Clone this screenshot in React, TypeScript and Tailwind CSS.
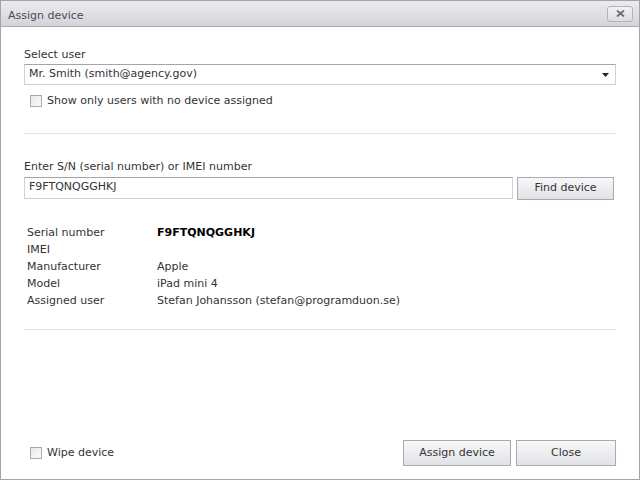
export default function App() {
  const rows: [string, string, boolean?][] = [
    ['Serial number', 'F9FTQNQGGHKJ', true],
    ['IMEI', ''],
    ['Manufacturer', 'Apple'],
    ['Model', 'iPad mini 4'],
    ['Assigned user', 'Stefan Johansson (stefan@programduon.se)'],
  ];

  return (
    <div
      className="w-[640px] h-[480px] bg-white border border-[#a3a3ad] flex flex-col text-[11px] text-[#333]"
      style={{ fontFamily: '"DejaVu Sans", Verdana, sans-serif' }}
    >
      {/* Title bar */}
      <div className="h-[26px] shrink-0 flex items-center justify-between pl-[7px] pr-[6px] bg-gradient-to-b from-[#ececf0] to-[#d3d4d9] border-b border-[#a9a9b3]">
        <span className="mt-[5px] text-[#4b4b57] text-[11px]">Assign device</span>
        <button className="w-[26px] h-[16px] rounded-[3px] border border-[#b3b3bb] bg-gradient-to-b from-[#f2f2f4] to-[#dcdde1] flex items-center justify-center">
          <svg width="9" height="7" viewBox="0 0 9 7">
            <path d="M1 0.5 L8 6.5 M8 0.5 L1 6.5" stroke="#6b6b75" strokeWidth="1.8" />
          </svg>
        </button>
      </div>

      <div className="flex-1 flex flex-col px-[23px]">
        {/* Select user */}
        <div className="mt-[21px] leading-[14px]">Select user</div>
        <div className="mt-[2px] h-[21px] flex items-center justify-between pl-[4px] pr-[6px] border border-[#d2d2d6] border-t-[#a4a4ae]">
          <span>Mr. Smith (smith@agency.gov)</span>
          <svg width="7" height="4" viewBox="0 0 7 4">
            <path d="M0 0 H7 L3.5 4 Z" fill="#222" />
          </svg>
        </div>
        <label className="mt-[8px] ml-[6px] flex items-center gap-[5px]">
          <span className="w-[12px] h-[12px] border border-[#a9a9b2] bg-gradient-to-br from-[#e8e8ec] to-[#fafafa]" />
          <span>Show only users with no device assigned</span>
        </label>

        <div className="mt-[23px] h-px bg-[#e2e2e4]" />

        {/* Serial lookup */}
        <div className="mt-[26px] leading-[14px]">Enter S/N (serial number) or IMEI number</div>
        <div className="mt-[3px] flex gap-[4px]">
          <div className="w-[489px] h-[22px] flex items-center pl-[4px] border border-[#d2d2d6] border-t-[#a4a4ae]">
            F9FTQNQGGHKJ
          </div>
          <button className="w-[97px] h-[23px] border border-[#aaaab2] bg-gradient-to-b from-[#f8f8fa] to-[#e1e2e7] text-[#333]">
            Find device
          </button>
        </div>

        {/* Details */}
        <div className="mt-[25px] ml-[3px] flex flex-col">
          {rows.map(([k, v, b]) => (
            <div key={k} className="h-[17px] flex items-center">
              <span className="w-[130px]">{k}</span>
              <span className={b ? 'font-bold text-black' : ''}>{v}</span>
            </div>
          ))}
        </div>

        <div className="mt-[19px] h-px bg-[#e2e2e4]" />

        {/* Footer */}
        <div className="mt-auto mb-[13px] flex items-center justify-between">
          <label className="ml-[6px] flex items-center gap-[5px]">
            <span className="w-[12px] h-[12px] border border-[#a9a9b2] bg-gradient-to-br from-[#e8e8ec] to-[#fafafa]" />
            <span>Wipe device</span>
          </label>
          <div className="flex gap-[5px]">
            <button className="w-[108px] h-[26px] border border-[#aaaab2] bg-gradient-to-b from-[#f8f8fa] to-[#e1e2e7] text-[#333]">
              Assign device
            </button>
            <button className="w-[100px] h-[26px] border border-[#aaaab2] bg-gradient-to-b from-[#f8f8fa] to-[#e1e2e7] text-[#333]">
              Close
            </button>
          </div>
        </div>
      </div>
    </div>
  );
}
